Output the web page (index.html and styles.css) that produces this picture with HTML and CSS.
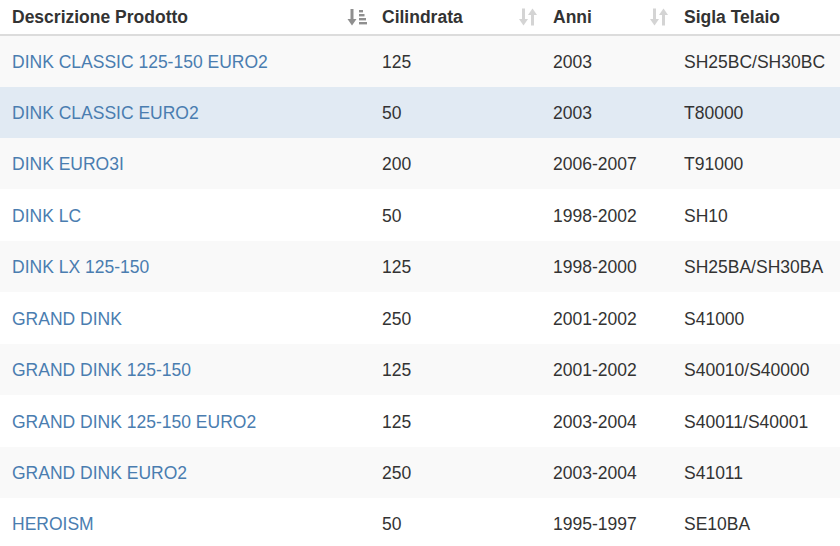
FILE: index.html
```html
<!DOCTYPE html>
<html lang="it">
<head>
<meta charset="utf-8">
<title>Modelli</title>
<link rel="stylesheet" href="styles.css">
</head>
<body>
<table class="grid">
  <colgroup>
    <col class="c1"><col class="c2"><col class="c3"><col class="c4">
  </colgroup>
  <thead>
    <tr>
      <th><div class="th-in"><span>Descrizione Prodotto</span>
        <svg class="sort sorted" viewBox="0 0 20 18" width="20" height="18" aria-hidden="true">
          <rect x="3.5" y="1" width="3" height="11"/>
          <polygon points="0.5,11 9.5,11 5,17.5"/>
          <rect x="12" y="2" width="4" height="2.4"/>
          <rect x="12" y="6" width="5.5" height="2.4"/>
          <rect x="12" y="10" width="7" height="2.4"/>
          <rect x="12" y="14" width="8.5" height="2.4"/>
        </svg></div></th>
      <th><div class="th-in"><span>Cilindrata</span>
        <svg class="sort" viewBox="0 0 20 18" width="20" height="18" aria-hidden="true">
          <rect x="4" y="0.5" width="3" height="11"/>
          <polygon points="1,11 10,11 5.5,17.5"/>
          <rect x="13" y="6.5" width="3" height="11"/>
          <polygon points="10,7 19,7 14.5,0.5"/>
        </svg></div></th>
      <th><div class="th-in"><span>Anni</span>
        <svg class="sort" viewBox="0 0 20 18" width="20" height="18" aria-hidden="true">
          <rect x="4" y="0.5" width="3" height="11"/>
          <polygon points="1,11 10,11 5.5,17.5"/>
          <rect x="13" y="6.5" width="3" height="11"/>
          <polygon points="10,7 19,7 14.5,0.5"/>
        </svg></div></th>
      <th><div class="th-in"><span>Sigla Telaio</span></div></th>
    </tr>
  </thead>
  <tbody>
    <tr class="odd"><td><a href="#">DINK CLASSIC 125-150 EURO2</a></td><td>125</td><td>2003</td><td>SH25BC/SH30BC</td></tr>
    <tr class="hover"><td><a href="#">DINK CLASSIC EURO2</a></td><td>50</td><td>2003</td><td>T80000</td></tr>
    <tr class="odd"><td><a href="#">DINK EURO3I</a></td><td>200</td><td>2006-2007</td><td>T91000</td></tr>
    <tr class="tall"><td><a href="#">DINK LC</a></td><td>50</td><td>1998-2002</td><td>SH10</td></tr>
    <tr class="odd"><td><a href="#">DINK LX 125-150</a></td><td>125</td><td>1998-2000</td><td>SH25BA/SH30BA</td></tr>
    <tr class="tall"><td><a href="#">GRAND DINK</a></td><td>250</td><td>2001-2002</td><td>S41000</td></tr>
    <tr class="odd"><td><a href="#">GRAND DINK 125-150</a></td><td>125</td><td>2001-2002</td><td>S40010/S40000</td></tr>
    <tr class="tall"><td><a href="#">GRAND DINK 125-150 EURO2</a></td><td>125</td><td>2003-2004</td><td>S40011/S40001</td></tr>
    <tr class="odd"><td><a href="#">GRAND DINK EURO2</a></td><td>250</td><td>2003-2004</td><td>S41011</td></tr>
    <tr><td><a href="#">HEROISM</a></td><td>50</td><td>1995-1997</td><td>SE10BA</td></tr>
  </tbody>
</table>
</body>
</html>
```
FILE: styles.css
```css
html, body {
  margin: 0;
  padding: 0;
  background: #fff;
}
body {
  font-family: "Liberation Sans", Arial, sans-serif;
  font-size: 17.5px;
  color: #333;
  overflow: hidden;
}
.grid {
  width: 840px;
  border-collapse: separate;
  border-spacing: 0;
  table-layout: fixed;
}
.c1 { width: 370px; }
.c2 { width: 171px; }
.c3 { width: 131px; }
.c4 { width: 168px; }
.grid th {
  text-align: left;
  font-weight: bold;
  line-height: 24px;
  height: 24px;
  padding: 5px 3px 5px 12px;
  border-bottom: 2px solid #dcdcdc;
}
.th-in {
  display: flex;
  align-items: center;
  justify-content: space-between;
}
.sort {
  display: block;
  fill: #d4d4d4;
  flex: none;
}
.sort.sorted {
  fill: #8f8f8f;
}
.grid tbody tr {
  height: 51px;
}
.grid tbody tr.tall {
  height: 52px;
}
.grid td {
  line-height: 25px;
  padding: 2px 12px 0;
  vertical-align: middle;
  white-space: nowrap;
}
.grid tr.odd td { background: #f9f9f9; }
.grid tr.hover td { background: #e1eaf3; }
.grid a {
  color: #4a7db0;
  text-decoration: none;
}
```
